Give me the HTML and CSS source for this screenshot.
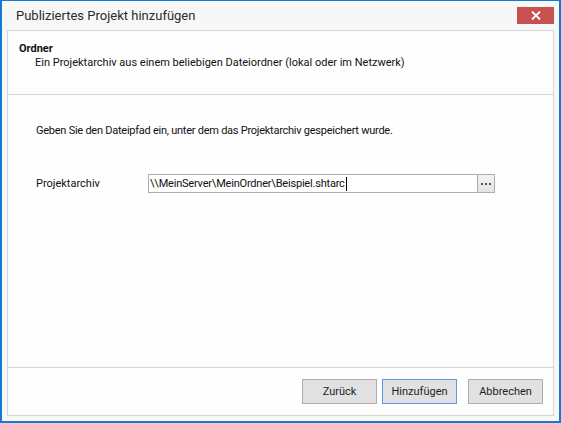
FILE: index.html
```html
<!DOCTYPE html>
<html lang="de">
<head>
<meta charset="utf-8">
<title>Publiziertes Projekt hinzufügen</title>
<link rel="stylesheet" href="styles.css">
</head>
<body>
<div class="window">
  <div class="titlebar">
    <span class="title">Publiziertes Projekt hinzufügen</span>
    <div class="close" aria-label="Schließen">
      <svg width="10" height="9" viewBox="0 0 10 9"><path d="M1 0.5 L9 8.5 M9 0.5 L1 8.5" stroke="#fff" stroke-width="1.8" fill="none"/></svg>
    </div>
  </div>
  <div class="panel">
    <div class="header">
      <div class="h-title">Ordner</div>
      <div class="h-desc">Ein Projektarchiv aus einem beliebigen Dateiordner (lokal oder im Netzwerk)</div>
    </div>
    <div class="content">
      <p class="intro">Geben Sie den Dateipfad ein, unter dem das Projektarchiv gespeichert wurde.</p>
      <div class="field">
        <span class="label">Projektarchiv</span>
        <div class="input">
          <span class="value">\\MeinServer\MeinOrdner\Beispiel.shtarc</span><span class="caret"></span>
          <span class="browse"><i></i><i></i><i></i></span>
        </div>
      </div>
    </div>
    <div class="footer">
      <span class="btn">Zurück</span>
      <span class="btn focus">Hinzufügen</span>
      <span class="btn cancel">Abbrechen</span>
    </div>
  </div>
</div>
</body>
</html>
```
FILE: styles.css
```css
* { box-sizing: border-box; }
html, body { margin: 0; padding: 0; }
body {
  font-family: Roboto, "Liberation Sans", sans-serif;
  font-size: 11px;
  color: #111;
  background: #f7f7f7;
}
.window {
  width: 561px;
  height: 423px;
  background: #f7f7f7;
  border-style: solid;
  border-color: #1379d1;
  border-width: 1px 2px 2px 2px;
  display: flex;
  flex-direction: column;
  padding: 0 5px 5px 5px;
}
.titlebar {
  height: 29px;
  display: flex;
  align-items: flex-start;
  justify-content: space-between;
  flex: none;
}
.title {
  font-size: 13px;
  color: #2b2b2b;
  margin: 6px 0 0 9px;
  line-height: 18px;
}
.close {
  width: 37px;
  height: 17px;
  margin-top: 6px;
  background: #c75050;
  display: flex;
  align-items: center;
  justify-content: center;
}
.panel {
  flex: 1;
  background: #fefefe;
  border: 1px solid #d4d4d4;
  display: flex;
  flex-direction: column;
}
.header {
  height: 64px;
  border-bottom: 1px solid #d4d4d4;
  padding: 11px 0 0 11px;
  line-height: 14px;
}
.h-title { font-weight: bold; }
.h-desc { padding-left: 16px; margin-top: 0; }
.content {
  flex: 1;
  padding: 28px 0 0 28px;
}
.intro {
  margin: 0;
  line-height: 16px;
  letter-spacing: -0.25px;
}
.field {
  margin-top: 35px;
  display: flex;
  align-items: center;
  height: 19px;
}
.label { width: 112px; }
.input {
  width: 347px;
  height: 19px;
  border: 1px solid #abadb3;
  background: #fff;
  display: flex;
  align-items: center;
  padding-left: 1px;
}
.value { white-space: pre; letter-spacing: -0.2px; }
.caret {
  width: 1px;
  height: 14px;
  background: #000;
  margin-left: 1px;
}
.browse {
  margin-left: auto;
  width: 17px;
  height: 17px;
  border-left: 1px solid #abadb3;
  background: linear-gradient(#f2f2f2, #e4e4e4);
  display: flex;
  align-items: center;
  justify-content: center;
  gap: 2px;
}
.browse i {
  width: 2px;
  height: 2px;
  background: #555;
}
.footer {
  height: 48px;
  border-top: 1px solid #d4d4d4;
  display: flex;
  justify-content: flex-end;
  align-items: flex-start;
  padding: 11px 10px 0 0;
  gap: 5px;
}
.btn {
  width: 75px;
  height: 25px;
  border: 1px solid #adadad;
  background: #e1e1e1;
  display: flex;
  align-items: center;
  justify-content: center;
  color: #1e1e1e;
}
.btn.focus { border-color: #569de5; }
.btn.cancel { margin-left: 6px; }
```
